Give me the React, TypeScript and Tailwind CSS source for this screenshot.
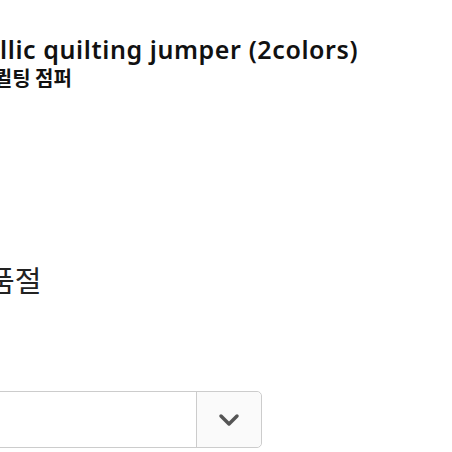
import { ChevronDown } from 'lucide-react';

export default function App() {
  return (
    <div className="w-[452px] h-[452px] overflow-hidden bg-white" style={{ fontFamily: '"Noto Sans", "Noto Sans CJK KR", sans-serif' }}>
      <div className="-ml-[65px] w-[540px] pt-[33px]">
        <h1 className="text-[25px] leading-[32px] font-semibold text-[#111] tracking-[0.6px] whitespace-nowrap">
          Metallic quilting jumper (2colors)
        </h1>
        <p className="-ml-[1px] text-[20px] leading-[26px] font-bold text-[#111] whitespace-nowrap" style={{ fontFamily: '"Noto Sans CJK KR", sans-serif' }}>
          메탈릭 퀼팅 점퍼
        </p>
        <p className="ml-[53px] mt-[170px] text-[29px] leading-[36px] text-[#222]" style={{ fontFamily: '"Noto Sans CJK KR", sans-serif' }}>
          품절
        </p>
        <div className="mt-[94px] flex w-[327px] h-[57px] border border-[#cccccc] rounded-r-[5px] bg-white">
          <div className="flex-1" />
          <div className="w-[65px] border-l border-[#cccccc] bg-[#fafafa] rounded-r-[5px] flex items-center justify-center">
            <ChevronDown className="w-[32px] h-[32px] text-[#555]" strokeWidth={2.6} />
          </div>
        </div>
      </div>
    </div>
  );
}
